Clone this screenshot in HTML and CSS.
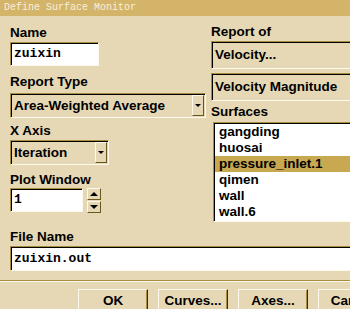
FILE: index.html
```html
<!DOCTYPE html>
<html lang="en">
<head>
    <meta charset="UTF-8">
    <title>Define Surface Monitor</title>
    <link rel="stylesheet" href="styles.css">
</head>
<body>
    <div class="dialog">
        <div class="titlebar">Define Surface Monitor</div>
        <div class="panel">
            <div class="col left">
                <div class="label name-label">Name</div>
                <div class="textbox sunken name-box">zuixin</div>

                <div class="label gap-8">Report Type</div>
                <div class="dropdown sunken wide gap-3">
                    <span class="value">Area-Weighted Average</span>
                    <span class="arrow"></span>
                </div>

                <div class="label gap-5">X Axis</div>
                <div class="dropdown sunken narrow gap-1">
                    <span class="value">Iteration</span>
                    <span class="arrow"></span>
                </div>

                <div class="label gap-7">Plot Window</div>
                <div class="spin-row">
                    <div class="textbox sunken plot-box">1</div>
                    <div class="spinner">
                        <span class="spin up"></span>
                        <span class="spin down"></span>
                    </div>
                </div>
            </div>

            <div class="col right">
                <div class="label">Report of</div>
                <div class="field sunken gap-1">Velocity...</div>
                <div class="field sunken gap-4">Velocity Magnitude</div>

                <div class="label gap-3">Surfaces</div>
                <ul class="list sunken">
                    <li>gangding</li>
                    <li>huosai</li>
                    <li class="selected">pressure_inlet.1</li>
                    <li>qimen</li>
                    <li>wall</li>
                    <li>wall.6</li>
                </ul>
            </div>
        </div>

        <div class="file">
            <div class="label">File Name</div>
            <div class="textbox sunken file-box">zuixin.out</div>
        </div>

        <div class="separator"></div>

        <div class="buttons">
            <button>OK</button>
            <button>Curves...</button>
            <button>Axes...</button>
            <button>Cancel</button>
        </div>
    </div>
</body>
</html>
```

FILE: styles.css
```css
* {
    box-sizing: border-box;
}
body {
    margin: 0;
    overflow: hidden;
    background-color: #e6d8b4;
    font-family: "Liberation Sans", Arial, sans-serif;
    color: #000;
}
.dialog {
    width: 480px;
}
.titlebar {
    height: 16px;
    background-color: #d4b468;
    color: #f8f0dc;
    font: 10px/16px "Liberation Mono", monospace;
    padding-left: 4px;
    white-space: pre;
}
.panel {
    display: grid;
    grid-template-columns: 196px 1fr;
    column-gap: 5px;
    padding-left: 10px;
    align-items: start;
}
.left {
    padding-top: 9px;
}
.right {
    padding-top: 8px;
}
.label {
    font-weight: bold;
    font-size: 13.5px;
    line-height: 16px;
    height: 16px;
    white-space: nowrap;
}
.gap-1 { margin-top: 1px; }
.gap-3 { margin-top: 3px; }
.gap-4 { margin-top: 4px; }
.gap-5 { margin-top: 5px; }
.gap-7 { margin-top: 7px; }
.gap-8 { margin-top: 8px; }

.sunken {
    border: 1px solid;
    border-color: #a88c40 #fff8ec #fff8ec #a88c40;
    box-shadow: inset 1px 1px 0 #000;
}
.textbox {
    background-color: #fff;
    height: 24px;
    font: bold 13px/22px "Liberation Mono", monospace;
    padding-left: 3px;
}
.name-box {
    margin-top: 1px;
    width: 89px;
}
.plot-box {
    width: 73px;
}
.file-box {
    margin-top: 1px;
    height: 25px;
    line-height: 23px;
}

.dropdown {
    display: flex;
    align-items: center;
    justify-content: space-between;
    height: 25px;
    padding: 1px 1px 1px 3px;
    font-weight: bold;
    font-size: 13.5px;
    white-space: nowrap;
}
.dropdown.wide {
    width: 196px;
}
.dropdown.narrow {
    width: 99px;
}
.arrow {
    width: 12px;
    height: 21px;
    border: 1px solid;
    border-color: #fff8ec #6a5420 #6a5420 #fff8ec;
    display: flex;
    align-items: center;
    justify-content: center;
}
.arrow::after,
.spin.down::after {
    content: "";
    border-left: 3px solid transparent;
    border-right: 3px solid transparent;
    border-top: 3px solid #000;
}

.spin-row {
    display: flex;
    gap: 4px;
}
.spinner {
    display: flex;
    flex-direction: column;
    gap: 1px;
}
.spin {
    width: 14px;
    height: 12px;
    border: 1px solid;
    border-color: #fff8ec #6a5420 #6a5420 #fff8ec;
    display: flex;
    align-items: center;
    justify-content: center;
}
.spin.up::after {
    content: "";
    border-left: 4px solid transparent;
    border-right: 4px solid transparent;
    border-bottom: 4px solid #000;
}
.spin.down::after {
    border-left-width: 4px;
    border-right-width: 4px;
    border-top-width: 4px;
}

.field {
    height: 28px;
    padding-left: 3px;
    font-weight: bold;
    font-size: 13.5px;
    line-height: 26px;
    white-space: nowrap;
}
.list {
    list-style: none;
    margin: 2px 0 0 2px;
    padding: 1px 0 0 1px;
    background-color: #fff;
    height: 100px;
    font-weight: bold;
    font-size: 13.5px;
}
.list li {
    height: 16px;
    line-height: 16px;
    padding-left: 4px;
    white-space: nowrap;
}
.list li.selected {
    background-color: #c8a850;
}

.file {
    padding: 7px 0 0 10px;
}
.separator {
    margin-top: 9px;
    height: 2px;
    border-top: 1px solid #a88c40;
    border-bottom: 1px solid #fff8ec;
}
.buttons {
    display: flex;
    gap: 10px;
    margin-top: 7px;
    padding-left: 78px;
}
button {
    width: 70px;
    height: 22px;
    padding: 0;
    background-color: #e6d8b4;
    border: 1px solid;
    border-color: #fff8ec #3a2c08 #3a2c08 #fff8ec;
    box-shadow: inset -1px -1px 0 #a88c40;
    font-family: "Liberation Sans", Arial, sans-serif;
    font-weight: bold;
    font-size: 13.5px;
    color: #000;
}
```
